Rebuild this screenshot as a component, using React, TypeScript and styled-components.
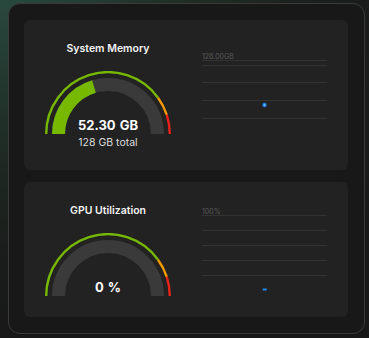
import React from "react";
import styled, { createGlobalStyle } from "styled-components";

const GlobalStyle = createGlobalStyle`
  html, body {
    margin: 0;
    padding: 0;
    width: 369px;
    height: 338px;
    overflow: hidden;
    background: radial-gradient(ellipse 130% 100% at 0% 0%, #29493f 0%, #1f2d25 40%, #1a1c1b 75%, #181818 100%);
    font-family: Inter, "Noto Sans", sans-serif;
  }
  * { box-sizing: border-box; }
`;

const Page = styled.div`
  padding: 3px 4px 4px 8px;
`;

const Panel = styled.div`
  width: 357px;
  height: 331px;
  background: #181818;
  border: 1px solid #3a3a3a;
  border-radius: 12px;
  padding: 16px 16px 15px 15px;
  display: flex;
  flex-direction: column;
  gap: 12px;
`;

const Card = styled.section`
  background: #222222;
  border-radius: 6px;
  padding: 21px 21px 21px;
  display: grid;
  grid-template-columns: 1fr 1fr;
  column-gap: 31px;
  align-items: center;
`;

const GaugeColumn = styled.div`
  display: flex;
  flex-direction: column;
  align-items: center;
`;

const Title = styled.h2`
  margin: 0;
  font-size: 10.5px;
  line-height: 16px;
  font-weight: 600;
  color: #f2f2f2;
`;

const GaugeWrap = styled.div`
  position: relative;
  width: 126px;
  height: 63px;
  margin-top: 14px;
  svg { display: block; }
`;

const Value = styled.div`
  position: absolute;
  left: 0;
  right: 0;
  bottom: 1px;
  text-align: center;
  font-size: 13px;
  line-height: 16px;
  font-weight: 700;
  color: #ffffff;
  word-spacing: 1px;
`;

const Sub = styled.div`
  margin-top: 3px;
  font-size: 10.5px;
  line-height: 12px;
  color: #dcdcdc;
`;

const ChartBox = styled.div`
  width: 125px;
  svg { display: block; overflow: visible; }
`;

const CX = 63;
const CY = 63;

function arc(r: number, f0: number, f1: number) {
  const p = (f: number) => {
    const a = Math.PI * f;
    return [CX - r * Math.cos(a), CY - r * Math.sin(a)];
  };
  const [x0, y0] = p(f0);
  const [x1, y1] = p(f1);
  const large = f1 - f0 > 1 ? 1 : 0;
  return `M ${x0.toFixed(2)} ${y0.toFixed(2)} A ${r} ${r} 0 ${large} 1 ${x1.toFixed(2)} ${y1.toFixed(2)}`;
}

function Gauge({ fraction, value }: { fraction: number; value: string }) {
  return (
    <GaugeWrap>
      <svg width="126" height="63" viewBox="0 0 126 63">
        <path d={arc(61.8, 0, 0.8)} stroke="#76b900" strokeWidth="2.4" fill="none" />
        <path d={arc(61.8, 0.8, 0.9)} stroke="#f29a00" strokeWidth="2.4" fill="none" />
        <path d={arc(61.8, 0.9, 1)} stroke="#e5231b" strokeWidth="2.4" fill="none" />
        <path d={arc(49.5, 0, 1)} stroke="#3a3a3a" strokeWidth="13" fill="none" />
        {fraction > 0 && (
          <path d={arc(49.5, 0, fraction)} stroke="#76b900" strokeWidth="13" fill="none" />
        )}
      </svg>
      <Value>{value}</Value>
    </GaugeWrap>
  );
}

type ChartProps = {
  label: string;
  lines: number[];
  marker: { y: number; kind: "dot" | "dash" };
};

function MiniChart({ label, lines, marker }: ChartProps) {
  return (
    <ChartBox>
      <svg width="125" height="84" viewBox="0 0 125 84">
        <text x="0" y="6.3" fontSize="7" fill="#5a5a5a" fontFamily="Inter, 'Noto Sans', sans-serif">
          {label}
        </text>
        {lines.map((y) => (
          <line key={y} x1="0" x2="125" y1={y + 0.5} y2={y + 0.5} stroke="#323232" strokeWidth="1" />
        ))}
        {marker.kind === "dot" ? (
          <g>
            <circle cx="62.5" cy={marker.y} r="2.2" fill="#1b7fe6" />
            <circle cx="62.5" cy={marker.y} r="0.9" fill="#7cc4ff" />
          </g>
        ) : (
          <rect x="60.5" y={marker.y - 1} width="4.5" height="2" rx="1" fill="#1e8cf0" />
        )}
      </svg>
    </ChartBox>
  );
}

export default function App() {
  return (
    <>
      <GlobalStyle />
      <Page>
        <Panel>
          <Card>
            <GaugeColumn>
              <Title>System Memory</Title>
              <Gauge fraction={52.3 / 128} value="52.30 GB" />
              <Sub>128 GB total</Sub>
            </GaugeColumn>
            <MiniChart label="128.00GB" lines={[7, 12, 29, 47, 65]} marker={{ y: 52, kind: "dot" }} />
          </Card>
          <Card>
            <GaugeColumn>
              <Title>GPU Utilization</Title>
              <Gauge fraction={0} value="0 %" />
            </GaugeColumn>
            <MiniChart label="100%" lines={[7, 22, 37, 52, 67]} marker={{ y: 81.5, kind: "dash" }} />
          </Card>
        </Panel>
      </Page>
    </>
  );
}
